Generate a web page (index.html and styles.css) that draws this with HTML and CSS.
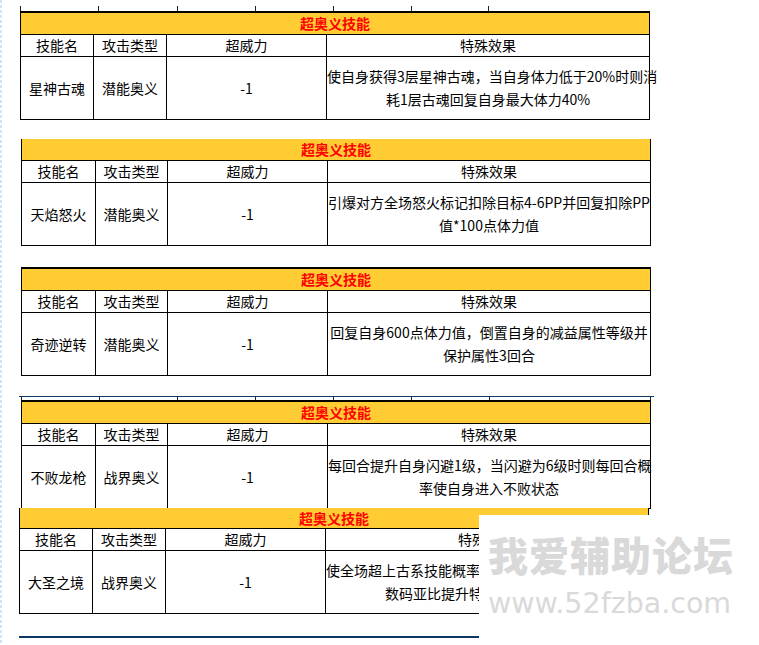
FILE: index.html
```html
<!DOCTYPE html>
<html lang="zh-CN">
<head>
<meta charset="utf-8">
<title>超奥义技能</title>
<link rel="stylesheet" href="styles.css">
</head>
<body>
<div class="page">

  <section class="block b1">
    <div class="ticks t1"><span></span><span></span><span></span><span></span><span></span><span></span><span></span></div>
    <div class="skill cols-a thick">
      <div class="title">超奥义技能</div>
      <div class="cell head">技能名</div>
      <div class="cell head">攻击类型</div>
      <div class="cell head">超威力</div>
      <div class="cell head">特殊效果</div>
      <div class="cell data">星神古魂</div>
      <div class="cell data">潜能奥义</div>
      <div class="cell data">-1</div>
      <div class="cell data effect">使自身获得3层星神古魂，当自身体力低于20%时则消<br>耗1层古魂回复自身最大体力40%</div>
    </div>
  </section>

  <section class="block b2">
    <div class="skill cols-b">
      <div class="title">超奥义技能</div>
      <div class="cell head">技能名</div>
      <div class="cell head">攻击类型</div>
      <div class="cell head">超威力</div>
      <div class="cell head">特殊效果</div>
      <div class="cell data">天焰怒火</div>
      <div class="cell data">潜能奥义</div>
      <div class="cell data">-1</div>
      <div class="cell data effect">引爆对方全场怒火标记扣除目标4-6PP并回复扣除PP<br>值*100点体力值</div>
    </div>
  </section>

  <section class="block b3">
    <div class="skill cols-b thick">
      <div class="title">超奥义技能</div>
      <div class="cell head">技能名</div>
      <div class="cell head">攻击类型</div>
      <div class="cell head">超威力</div>
      <div class="cell head">特殊效果</div>
      <div class="cell data">奇迹逆转</div>
      <div class="cell data">潜能奥义</div>
      <div class="cell data">-1</div>
      <div class="cell data effect">回复自身600点体力值，倒置自身的减益属性等级并<br>保护属性3回合</div>
    </div>
  </section>

  <section class="block b4">
    <div class="navy navy-top"></div>
    <div class="ticks t4"><span></span><span></span><span></span><span></span><span></span><span></span><span></span><span></span></div>
    <div class="skill cols-b thick">
      <div class="title">超奥义技能</div>
      <div class="cell head">技能名</div>
      <div class="cell head">攻击类型</div>
      <div class="cell head">超威力</div>
      <div class="cell head">特殊效果</div>
      <div class="cell data">不败龙枪</div>
      <div class="cell data">战界奥义</div>
      <div class="cell data">-1</div>
      <div class="cell data effect">每回合提升自身闪避1级，当闪避为6级时则每回合概<br>率使自身进入不败状态</div>
    </div>
  </section>

  <section class="block b5">
    <div class="skill cols-a short">
      <div class="title">超奥义技能</div>
      <div class="cell head">技能名</div>
      <div class="cell head">攻击类型</div>
      <div class="cell head">超威力</div>
      <div class="cell head head-cut">特殊</div>
      <div class="cell data">大圣之境</div>
      <div class="cell data">战界奥义</div>
      <div class="cell data">-1</div>
      <div class="cell data effect effect-cut"><span class="cut-l1">使全场超上古系技能概率</span><span class="cut-l2">数码亚比提升特</span></div>
    </div>
    <div class="navy navy-bottom"></div>
  </section>

  <div class="watermark">
    <div class="wm-cn">我爱辅助论坛</div>
    <div class="wm-url">www.52fzba.com</div>
  </div>
</div>
</body>
</html>
```

FILE: styles.css
```css
* {
  box-sizing: border-box;
}

html, body {
  margin: 0;
  padding: 0;
  background: #ffffff;
}

body {
  font-family: "Noto Sans CJK SC", "Liberation Sans", sans-serif;
  font-size: 14px;
  color: #000;
}

.page {
  position: relative;
  width: 759px;
  height: 645px;
  overflow: hidden;
  background-image: linear-gradient(to bottom, #cfe4f7 60%, transparent 60%);
  background-size: 2px 5px;
  background-repeat: repeat-y;
  background-position: 0 0;
}

.block {
  display: flex;
  flex-direction: column;
  align-items: flex-start;
}

/* short vertical ticks left from a cut-off table above */
.ticks {
  display: grid;
  height: 5px;
}

.ticks span {
  border-left: 1px solid #222;
}

.t1 {
  margin-left: 20px;
  margin-top: 6px;
  grid-template-columns: 78px 79px 78px 78px 78px 77px 1px;
}

.t4 {
  margin-left: 21px;
  height: 3px;
  grid-template-columns: 78px 78px 78px 78px 78px 78px 161px 1px;
}

.navy {
  background: #0d3863;
}

.navy-top {
  margin-left: 19px;
  width: 635px;
  height: 1px;
}

.navy-bottom {
  margin-top: 22px;
  width: 640px;
  height: 2px;
}

/* skill tables */
.skill {
  display: grid;
  width: max-content;
  border-left: 1px solid #000;
}

.cols-a {
  grid-template-columns: 73px 73px 160px 323px;
}

.cols-b {
  grid-template-columns: 74px 72px 160px 323px;
}

.thick {
  border-top: 2px solid #000;
}

.title {
  grid-column: 1 / -1;
  height: 22px;
  background: #ffcc33;
  border-right: 1px solid #000;
  border-bottom: 1px solid #000;
  color: #ff0000;
  font-weight: 700;
  font-size: 14px;
  line-height: 21px;
  text-align: center;
}

.short .title {
  height: 21px;
  line-height: 20px;
}

.cell {
  display: flex;
  align-items: center;
  justify-content: center;
  text-align: center;
  border-right: 1px solid #000;
  border-bottom: 1px solid #000;
  white-space: nowrap;
}

.head {
  height: 22px;
  line-height: 21px;
}

.data {
  height: 63px;
  line-height: 23px;
}

.effect {
  display: block;
  padding-top: 8px;
}

/* last table: the right part is hidden under the watermark */
.head-cut {
  justify-content: flex-start;
  padding-left: 132px;
}

.effect-cut {
  text-align: left;
}

.cut-l1,
.cut-l2 {
  display: block;
}

.cut-l2 {
  padding-left: 59px;
}

/* block placement */
.b1 .skill {
  margin-left: 20px;
}

.b2 {
  margin-top: 19px;
}

.b2 .skill,
.b3 .skill,
.b4 .skill {
  margin-left: 21px;
}

.b3 {
  margin-top: 21px;
}

.b4 {
  margin-top: 20px;
}

.b5 {
  margin-top: -1px;
}

.b5 .skill,
.b5 .navy-bottom {
  margin-left: 19px;
}

/* watermark overlay */
.watermark {
  position: absolute;
  left: 479px;
  top: 515px;
  width: 280px;
  height: 130px;
  background: #ffffff;
  padding: 17px 0 0 9px;
}

.wm-cn {
  font-weight: 900;
  font-size: 40px;
  line-height: 44px;
  color: #d9d9d9;
  letter-spacing: 1px;
}

.wm-url {
  margin-top: 12px;
  font-family: "DejaVu Sans", sans-serif;
  font-size: 28.5px;
  line-height: 32px;
  color: #d9d9d9;
}
```
